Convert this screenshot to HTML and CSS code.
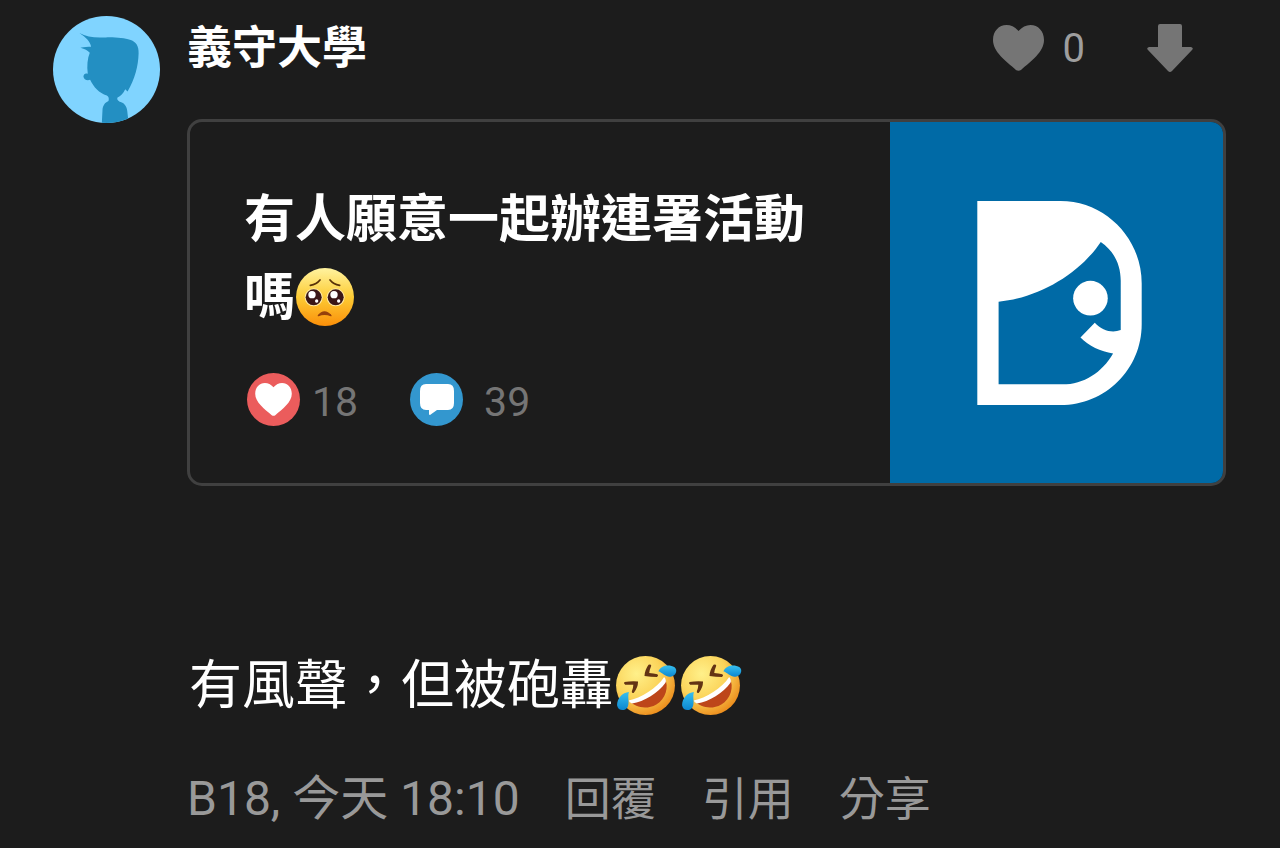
FILE: index.html
```html
<!DOCTYPE html>
<html lang="zh-Hant">
<head>
    <meta charset="UTF-8">
    <meta name="viewport" content="width=device-width, initial-scale=1.0">
    <title>義守大學 B18</title>
    <link rel="stylesheet" href="styles.css">
</head>
<body>

<!-- shared drawings -->
<svg class="defs" aria-hidden="true">
    <defs>
        <symbol id="heart" viewBox="0 0 51 46">
            <path d="M25.500 6C29 2 33 0 37.500 0C45 0 51 6 51 15C51 27 38 36 28 45Q25.500 46.500 23 45C13 36 0 27 0 15C0 6 6 0 13.500 0C18 0 22 2 25.500 6Z" fill="currentColor"/>
        </symbol>
        <radialGradient id="face" cx="0.35" cy="0.3" r="0.75">
            <stop offset="0" stop-color="#fff08a"/>
            <stop offset="0.55" stop-color="#fbd45a"/>
            <stop offset="1" stop-color="#ec8c1c"/>
        </radialGradient>
        <linearGradient id="sadface" x1="0" y1="0" x2="0" y2="1">
            <stop offset="0" stop-color="#fff3a0"/>
            <stop offset="0.5" stop-color="#fdcc35"/>
            <stop offset="1" stop-color="#fb8f09"/>
        </linearGradient>
        <linearGradient id="tear" x1="0" y1="0" x2="0" y2="1">
            <stop offset="0" stop-color="#37c0f0"/>
            <stop offset="1" stop-color="#0c86cf"/>
        </linearGradient>
        <symbol id="rofl" viewBox="0 0 192 192">
            <circle cx="96" cy="96" r="87" fill="url(#face)"/>
            <path d="M48 142C82 136 132 106 153 75C166 98 156 136 128 152C100 168 68 162 48 142Z" fill="#bd461a"/>
            <path d="M46 140C82 134 130 104 151 71Q159 80 155 88C134 118 92 144 56 149Q48 146 46 140Z" fill="#fff"/>
            <path d="M34 86Q54 82 74 84Q74 102 61 118Q54 118 56 112Q60 102 60 94Q48 94 36 94Q30 90 34 86ZM105 35Q112 32 113 38Q108 50 107 59Q120 60 131 63Q136 67 130 71Q112 71 93 68Q94 50 105 35Z" fill="#633414"/>
            <path d="M134 54C142 36 165 32 182 42C192 50 186 68 170 70C156 72 146 58 134 54Z" fill="url(#tear)"/>
            <path d="M47 115C28 116 12 134 12 154C14 170 34 174 43 160C50 147 42 130 47 115Z" fill="url(#tear)"/>
        </symbol>
    </defs>
</svg>

<article class="comment">
    <svg class="avatar" viewBox="0 0 320 320" role="img" aria-label="頭像">
        <clipPath id="round"><circle cx="160" cy="160" r="160"/></clipPath>
        <g clip-path="url(#round)">
            <rect width="320" height="320" fill="#80d4ff"/>
            <path d="M79 51C100 63 125 66 158 64C185 63 215 66 230 71C249 77 257 90 256 112C255 150 245 188 223 226L216 219C210 232 202 240 193 244C190 251 196 256 206 259C219 265 222 278 223 292L226 320H146L148 282C149 267 155 259 166 254C168 247 167 241 161 238C138 231 122 214 111 191C101 194 92 190 91 181C92 172 98 170 104 173C101 149 103 127 110 110C104 103 95 98 82 95C94 92 104 92 114 92C111 76 99 65 79 51Z" fill="#238fc2"/>
        </g>
    </svg>

    <div class="main">
        <header class="top">
            <h1 class="name">義守大學</h1>
            <button class="vote like" aria-label="喜歡">
                <svg width="51" height="46"><use href="#heart"/></svg>
                <span>0</span>
            </button>
            <button class="vote" aria-label="不喜歡">
                <svg width="46" height="49" viewBox="0 0 46 49">
                    <path d="M13 0H33Q35 0 35 2V23H44Q47 24 45 26L25 47Q23 49 21 47L1 26Q-1 24 2 23H11V2Q11 0 13 0Z" fill="currentColor"/>
                </svg>
            </button>
        </header>

        <a class="card" href="#">
            <div class="card-text">
                <h2 class="card-title">有人願意一起辦連署活動嗎<svg class="emoji" viewBox="0 0 180 180" role="img" aria-label="🥺">
                    <circle cx="90" cy="90" r="87" fill="url(#sadface)"/>
                    <path d="M46 55Q65 52 75 39M134 55Q115 52 105 39" fill="none" stroke="#573008" stroke-width="5" stroke-linecap="round"/>
                    <circle cx="56" cy="91" r="27" fill="#ffeaa5"/>
                    <circle cx="122" cy="91" r="27" fill="#ffeaa5"/>
                    <circle cx="56" cy="91" r="24" fill="#3b1717"/>
                    <circle cx="122" cy="91" r="24" fill="#3b1717"/>
                    <circle cx="51" cy="83" r="11" fill="#fff"/>
                    <circle cx="117" cy="83" r="11" fill="#fff"/>
                    <circle cx="65" cy="102" r="5" fill="#fff"/>
                    <circle cx="131" cy="102" r="5" fill="#fff"/>
                    <path d="M70 146Q88 124 108 146Q88 138 70 146Z" fill="#96410c" stroke="#96410c" stroke-width="4" stroke-linejoin="round"/>
                </svg></h2>
                <div class="stats">
                    <span class="stat">
                        <span class="badge red"><svg width="37" height="33"><use href="#heart"/></svg></span>
                        <span>18</span>
                    </span>
                    <span class="stat comments">
                        <span class="badge blue">
                            <svg width="34" height="31" viewBox="0 0 34 31"><path d="M6 0H28Q34 0 34 7V19Q34 26 28 26H17L10 31Q9 31 9 30V26H6Q0 26 0 19V7Q0 0 6 0Z" fill="#fff"/></svg>
                        </span>
                        <span>39</span>
                    </span>
                </div>
            </div>
            <div class="thumb">
                <svg viewBox="0 0 494 613" role="img" aria-label="Dcard">
                    <path fill="#fff" fill-rule="evenodd" d="M0 0H250C385 0 494 112 494 248V370C494 505 385 613 250 613H0ZM64 303C190 290 310 215 371 123C410 150 431 190 431 240V388C405 398 375 390 353 366L310 410C335 436 370 452 408 458C375 515 320 551 256 551H64Z"/>
                    <circle cx="340" cy="292" r="52" fill="#fff"/>
                </svg>
            </div>
        </a>

        <p class="message">有風聲，但被砲轟<svg class="laugh" role="img" aria-label="🤣"><use href="#rofl"/></svg><svg class="laugh" role="img" aria-label="🤣"><use href="#rofl"/></svg></p>

        <footer class="actions">
            <span class="info">B18, 今天 18:10</span>
            <button>回覆</button>
            <button>引用</button>
            <button>分享</button>
        </footer>
    </div>
</article>

</body>
</html>
```

FILE: styles.css
```css
* {
    box-sizing: border-box;
}

body {
    margin: 0;
    background-color: #1c1c1c;
    color: #ffffff;
    font-family: Roboto, "Noto Sans CJK TC", sans-serif;
}

h1, h2, p {
    margin: 0;
}

button {
    padding: 0;
    border: none;
    background: none;
    color: inherit;
    font: inherit;
    cursor: pointer;
}

.defs {
    position: absolute;
    width: 0;
    height: 0;
}

.comment {
    display: flex;
    gap: 27px;
    padding: 16px 54px 16px 53px;
}

.avatar {
    flex: none;
    width: 107px;
    height: 107px;
}

.main {
    flex: 1;
    min-width: 0;
}

.top {
    display: flex;
    align-items: center;
    height: 64px;
    margin-bottom: 39px;
    padding-right: 33px;
}

.name {
    flex: 1;
    padding-top: 2px;
    font-size: 45px;
    font-weight: 700;
    line-height: 66px;
}

.vote {
    display: flex;
    align-items: center;
    color: #757575;
    font-size: 40px;
}

.like {
    gap: 19px;
    margin-right: 62px;
}

.like span {
    color: #9e9e9e;
}

.card {
    display: flex;
    border: 3px solid #404040;
    border-radius: 15px;
    overflow: hidden;
    color: inherit;
    text-decoration: none;
}

.card-text {
    flex: 1;
    padding: 59px 54px 52px;
}

.card-title {
    font-size: 51px;
    font-weight: 700;
    line-height: 78px;
}

.emoji {
    width: 60px;
    height: 60px;
    margin-top: -8px;
    margin-bottom: 2px;
    vertical-align: middle;
}

.stats {
    display: flex;
    gap: 52px;
    margin-top: 36px;
    padding-left: 3px;
    color: #757575;
    font-size: 41px;
    line-height: 58px;
}

.stat {
    display: flex;
    align-items: flex-start;
    gap: 12px;
}

.comments {
    gap: 21px;
}

.badge {
    display: flex;
    align-items: center;
    justify-content: center;
    width: 53px;
    height: 53px;
    border-radius: 50%;
    color: #ffffff;
}

.red {
    background-color: #eb5c5c;
}

.blue {
    background-color: #3397cf;
}

.thumb {
    display: flex;
    align-items: center;
    justify-content: center;
    width: 333px;
    padding-left: 6px;
    background-color: #006aa6;
}

.thumb svg {
    width: 165px;
    height: 204px;
}

.message {
    margin-top: 160px;
    padding-left: 2px;
    font-size: 53px;
    line-height: 80px;
}

.laugh {
    width: 65px;
    height: 65px;
    margin-bottom: 10px;
    vertical-align: middle;
}

.actions {
    display: flex;
    gap: 45px;
    margin-top: 35px;
    color: #999999;
    font-size: 46px;
    line-height: 72px;
}

.info {
    font-size: 48px;
}
```
